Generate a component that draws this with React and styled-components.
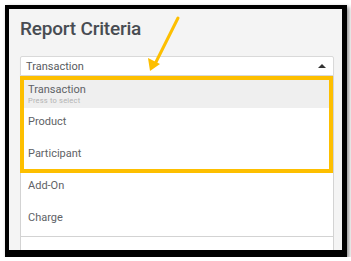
import React from "react";
import styled, { createGlobalStyle } from "styled-components";

const Global = createGlobalStyle`
  html, body { margin: 0; padding: 0; background: #ffffff; }
  body { font-family: Roboto, "Noto Sans", sans-serif; }
`;

const Frame = styled.div`
  margin: 5px 0 0 5px;
  width: 333px;
  height: 241px;
  border-style: solid;
  border-color: #000;
  border-width: 4px 5px 7px 4px;
  box-shadow: 2px 2px 4px rgba(0, 0, 0, 0.45);
  background: #f4f4f4;
  overflow: hidden;
  position: relative;
`;

const Content = styled.div`
  padding: 9px 8px 0 11px;
  display: flex;
  flex-direction: column;
`;

const Title = styled.h1`
  margin: 0;
  font-family: Roboto, sans-serif;
  font-weight: 500;
  font-size: 19px;
  line-height: 22px;
  color: #484c52;
  letter-spacing: -0.2px;
`;

const Field = styled.div`
  margin-top: 16px;
  position: relative;
  display: flex;
  flex-direction: column;
`;

const Select = styled.div`
  height: 18px;
  border: 1px solid #d9d9d9;
  border-radius: 2px 2px 0 0;
  background: #fff;
  box-shadow: 0 1px 1px rgba(0, 0, 0, 0.06);
  display: flex;
  align-items: center;
  justify-content: space-between;
  padding: 0 7px 0 5px;
  font-size: 11px;
  color: #585b60;
`;

const Caret = styled.span`
  width: 0;
  height: 0;
  border-left: 4px solid transparent;
  border-right: 4px solid transparent;
  border-bottom: 4px solid #333;
  margin-top: -1px;
`;

const List = styled.ul`
  margin: 0;
  padding: 0;
  list-style: none;
  background: #fff;
  border: 1px solid #d3d3d3;
  border-top: none;
  position: relative;
`;

const Item = styled.li`
  height: 32px;
  box-sizing: border-box;
  padding: 7px 7px 0 7px;
  background: ${(p) => (p.$active ? "#efefef" : "#fff")};
  display: flex;
  flex-direction: column;
`;

const Primary = styled.span`
  font-size: 11px;
  line-height: 13px;
  color: #606266;
`;

const Secondary = styled.span`
  font-size: 7.5px;
  line-height: 9px;
  color: #b3b3b3;
  letter-spacing: 0.2px;
`;

const Highlight = styled.div`
  position: absolute;
  left: -1px;
  right: 0;
  top: 0;
  height: 97px;
  box-sizing: border-box;
  border: 4px solid #fdbf00;
  pointer-events: none;
`;

const NextBox = styled.div`
  height: 30px;
  background: #fff;
  border: 1px solid #d3d3d3;
  border-top: none;
`;

const Arrow = styled.svg`
  position: absolute;
  left: 0;
  top: 0;
  pointer-events: none;
`;

const items = [
  { label: "Transaction", sub: "Press to select", active: true },
  { label: "Product" },
  { label: "Participant" },
  { label: "Add-On" },
  { label: "Charge" },
];

export default function App() {
  return (
    <>
      <Global />
      <Frame>
        <Content>
          <Title>Report Criteria</Title>
          <Field>
            <Select>
              <span>Transaction</span>
              <Caret />
            </Select>
            <List>
              {items.map((it) => (
                <Item key={it.label} $active={it.active}>
                  <Primary>{it.label}</Primary>
                  {it.sub && <Secondary>{it.sub}</Secondary>}
                </Item>
              ))}
              <Highlight />
            </List>
            <NextBox />
          </Field>
        </Content>
        <Arrow width="333" height="241" viewBox="0 0 333 241">
          <line x1="169" y1="9" x2="146" y2="55" stroke="#fdbf00" strokeWidth="3" strokeLinecap="round" />
          <polygon points="141,62 139,49 151,55" fill="#fdbf00" />
        </Arrow>
      </Frame>
    </>
  );
}
